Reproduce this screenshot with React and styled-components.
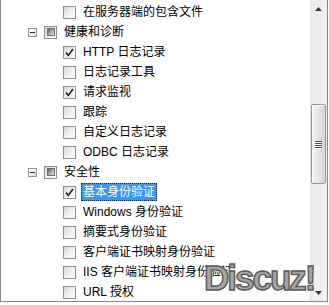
import React from 'react'
import styled, { createGlobalStyle } from 'styled-components'

const GlobalStyle = createGlobalStyle`
  html, body {
    margin: 0;
    padding: 0;
    background: #ffffff;
  }
`

const Frame = styled.div`
  position: relative;
  width: 326px;
  height: 301px;
  border: 1px solid #828790;
  border-top: none;
  display: flex;
  background: #ffffff;
  overflow: hidden;
`

const List = styled.div`
  flex: 1;
  padding-top: 2px;
  overflow: hidden;
  font-family: 'Liberation Sans', 'Noto Sans CJK SC', sans-serif;
  font-size: 12px;
  color: #000000;
`

const Row = styled.div`
  display: flex;
  align-items: center;
  height: 20px;
  padding-left: ${(p) => 27 + (p.$level - 1) * 19}px;
  white-space: nowrap;
`

const ExpanderSlot = styled.div`
  width: 16px;
  height: 9px;
  flex: none;
`

const Expander = styled.div`
  position: relative;
  width: 7px;
  height: 7px;
  border: 1px solid #959595;
  background: linear-gradient(135deg, #ffffff 0%, #f0f0f0 55%, #d9d9d9 100%);

  &::after {
    content: '';
    position: absolute;
    left: 1px;
    top: 3px;
    width: 5px;
    height: 1px;
    background: #2b2b2b;
  }
`

const Box = styled.div`
  position: relative;
  flex: none;
  width: 11px;
  height: 11px;
  border: 1px solid #8e8f8f;
  background: linear-gradient(135deg, #d4d4d4 0%, #eeeeee 45%, #ffffff 100%);
  display: flex;
  align-items: center;
  justify-content: center;
`

const Mixed = styled.div`
  width: 6px;
  height: 6px;
  border: 1px solid #6f6f6f;
  background: linear-gradient(135deg, #5e5e5e 0%, #a8a8a8 50%, #e2e2e2 100%);
`

const Label = styled.span`
  margin-left: 5px;
  padding: 0 1px;
  line-height: 16px;
  border: 1px ${(p) => (p.$selected ? 'dotted #1a2a60' : 'solid transparent')};
  background: ${(p) => (p.$selected ? '#3399ff' : 'transparent')};
  color: ${(p) => (p.$selected ? '#ffffff' : '#000000')};
`

const ScrollBar = styled.div`
  width: 17px;
  flex: none;
  display: flex;
  flex-direction: column;
  background: linear-gradient(to right, #e3e3e3 0px, #eeeeee 2px, #f0f0f0 100%);
`

const ArrowButton = styled.div`
  height: 17px;
  flex: none;
  display: flex;
  align-items: center;
  justify-content: center;
`

const Track = styled.div`
  flex: 1;
  padding-top: 87px;
  display: flex;
  justify-content: center;
`

const Thumb = styled.div`
  width: 13px;
  height: 78px;
  border: 1px solid #969696;
  border-radius: 2px;
  background: linear-gradient(to right, #f3f3f3 0%, #e6e6e6 45%, #d4d4d4 100%);
  box-shadow: inset 1px 1px 0 #ffffff;
  display: flex;
  flex-direction: column;
  align-items: center;
  justify-content: center;
  gap: 1px;
`

const Grip = styled.div`
  width: 7px;
  height: 1px;
  background: #4a4a4a;
  box-shadow: 0 1px 0 #ffffff;
`

const Watermark = styled.div`
  position: absolute;
  left: 203px;
  top: 258px;
  font-family: 'Liberation Sans', Arial, sans-serif;
  font-weight: bold;
  font-size: 35px;
  letter-spacing: -2px;
  color: #a6a6a6;
  -webkit-text-stroke: 1.4px #5a5a5a;
  text-shadow: 0 0 2px #ffffff, 1px 1px 0 #ffffff;
  pointer-events: none;
`

const rows = [
  { level: 2, state: 'off', label: '在服务器端的包含文件' },
  { level: 1, state: 'mixed', label: '健康和诊断', expander: true },
  { level: 2, state: 'on', label: 'HTTP 日志记录' },
  { level: 2, state: 'off', label: '日志记录工具' },
  { level: 2, state: 'on', label: '请求监视' },
  { level: 2, state: 'off', label: '跟踪' },
  { level: 2, state: 'off', label: '自定义日志记录' },
  { level: 2, state: 'off', label: 'ODBC 日志记录' },
  { level: 1, state: 'mixed', label: '安全性', expander: true },
  { level: 2, state: 'on', label: '基本身份验证', selected: true },
  { level: 2, state: 'off', label: 'Windows 身份验证' },
  { level: 2, state: 'off', label: '摘要式身份验证' },
  { level: 2, state: 'off', label: '客户端证书映射身份验证' },
  { level: 2, state: 'off', label: 'IIS 客户端证书映射身份验证' },
  { level: 2, state: 'off', label: 'URL 授权' },
]

function Check() {
  return (
    <svg width="9" height="9" viewBox="0 0 9 9">
      <path d="M1 4.6 L3.3 7.4 L8 1" fill="none" stroke="#262626" strokeWidth="1.7" />
    </svg>
  )
}

function CheckBox({ state }) {
  return (
    <Box>
      {state === 'on' && <Check />}
      {state === 'mixed' && <Mixed />}
    </Box>
  )
}

export default function App() {
  return (
    <>
      <GlobalStyle />
      <Frame>
        <List>
          {rows.map((row) => (
            <Row key={row.label} $level={row.level}>
              <ExpanderSlot>{row.expander && <Expander />}</ExpanderSlot>
              <CheckBox state={row.state} />
              <Label $selected={row.selected}>{row.label}</Label>
            </Row>
          ))}
        </List>
        <ScrollBar>
          <ArrowButton>
            <svg width="7" height="4" viewBox="0 0 7 4">
              <path d="M3.5 0 L7 4 L0 4 Z" fill="#3a3a3a" />
            </svg>
          </ArrowButton>
          <Track>
            <Thumb>
              <Grip />
              <Grip />
              <Grip />
              <Grip />
            </Thumb>
          </Track>
          <ArrowButton>
            <svg width="7" height="4" viewBox="0 0 7 4">
              <path d="M0 0 L7 0 L3.5 4 Z" fill="#3a3a3a" />
            </svg>
          </ArrowButton>
        </ScrollBar>
        <Watermark>Discuz!</Watermark>
      </Frame>
    </>
  )
}
